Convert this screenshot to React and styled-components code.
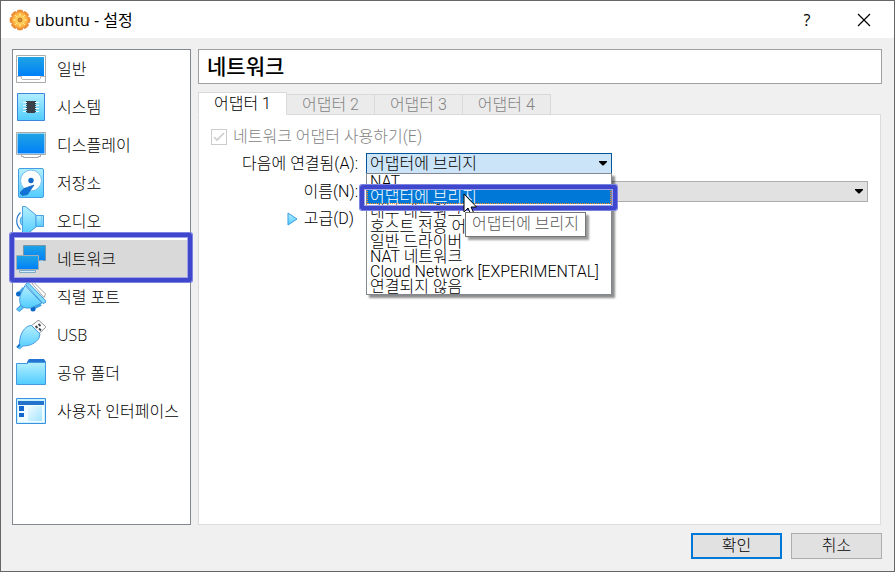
import React, { useState } from 'react';
import styled, { createGlobalStyle } from 'styled-components';

const GlobalStyle = createGlobalStyle`
  * {
    box-sizing: border-box;
  }
  body {
    margin: 0;
    color: #000;
    font-family: Roboto, "Noto Sans CJK KR", sans-serif;
    font-size: 16px;
    font-weight: 300;
    line-height: 20px;
  }
  button, select, input {
    font: inherit;
    color: inherit;
  }
`;

const Window = styled.div`
  display: flex;
  flex-direction: column;
  min-height: 100vh;
  border: 1px solid #666;
  background: #f0f0f0;
`;

const TitleBar = styled.header`
  display: flex;
  align-items: center;
  height: 37px;
  padding-left: 8px;
  background: #fff;
  font-family: "Open Sans", "Noto Sans CJK KR", sans-serif;
  font-weight: 400;
`;

const Title = styled.h1`
  flex: 1;
  margin: 0 0 0 4px;
  font-size: 16px;
  font-weight: 400;
`;

const TitleButton = styled.button`
  display: flex;
  align-items: center;
  justify-content: center;
  width: 57px;
  height: 36px;
  padding: 0 3px 0 0;
  border: 0;
  background: none;
`;

const Body = styled.div`
  display: flex;
  flex: 1;
  gap: 7px;
  padding: 11px 12px 8px 11px;
`;

const Sidebar = styled.nav`
  flex: 0 0 179px;
  border: 1px solid #828790;
  background: #fff;
  font-family: "Open Sans", "Noto Sans CJK KR", sans-serif;
`;

const SideItem = styled.button`
  position: relative;
  display: flex;
  align-items: center;
  gap: 10px;
  width: 100%;
  height: 38px;
  padding: 0 2px;
  border: 0;
  background: ${(p) => (p.$active ? '#d9d9d9' : 'none')};
  white-space: nowrap;
  z-index: ${(p) => (p.$active ? 1 : 0)};
`;

const Marker = styled.span`
  position: absolute;
  inset: ${(p) => p.$inset};
  border: 4px solid #3f48cc;
  border-radius: 2px;
  box-shadow: 0 0 0 1px #7b82e2, inset 0 0 0 1px #9fa4ea;
  pointer-events: none;
`;

const Content = styled.main`
  display: flex;
  flex: 1;
  flex-direction: column;
  min-width: 0;
`;

const Heading = styled.h2`
  display: flex;
  align-items: center;
  height: 35px;
  margin: 0 0 8px;
  padding: 0 8px;
  border: 1px solid #a0a0a0;
  background: #fff;
  font-size: 21px;
  font-weight: 500;
`;

const Tabs = styled.div`
  display: flex;
  align-items: flex-end;
  height: 23px;
  margin-bottom: -1px;
`;

const Tab = styled.button`
  position: relative;
  height: ${(p) => (p.$active ? 23 : 21)}px;
  padding: 0 15px;
  border: 1px solid #d9d9d9;
  border-left-width: ${(p) => (p.$first ? 1 : 0)}px;
  border-bottom-color: ${(p) => (p.$active ? '#fff' : '#d9d9d9')};
  background: ${(p) => (p.$active ? '#fff' : '#ebebeb')};
  color: ${(p) => (p.$active ? '#000' : '#838383')};
  line-height: 18px;
`;

const Panel = styled.section`
  flex: 1;
  margin-right: 1px;
  padding: 11px 12px;
  border: 1px solid #dcdcdc;
  background: #fff;
`;

const CheckRow = styled.label`
  display: flex;
  align-items: center;
  gap: 6px;
  height: 22px;
  color: #838383;
`;

const Checkbox = styled.input`
  appearance: none;
  width: 16px;
  height: 16px;
  margin: 0;
  border: 1px solid #ccc;
  background: #fff;
`;

const CheckWrap = styled.span`
  position: relative;
  display: flex;

  svg {
    position: absolute;
    inset: 0;
  }
`;

const Form = styled.div`
  display: grid;
  grid-template-columns: 147px 1fr;
  gap: 7px 8px;
  align-items: center;
  margin-top: 5px;
`;

const Label = styled.label`
  text-align: right;
  white-space: nowrap;
`;

const SelectWrap = styled.div`
  position: relative;
  width: ${(p) => p.$width};

  > svg {
    position: absolute;
    top: 8px;
    right: 5px;
    pointer-events: none;
  }
`;

const Select = styled.select`
  appearance: none;
  display: block;
  width: 100%;
  height: 21px;
  padding: 0 20px 0 3px;
  border: 1px solid ${(p) => (p.$open ? '#00559b' : '#adadad')};
  border-radius: 0;
  outline: 0;
  background: ${(p) => (p.$open ? '#cce4f7' : '#e1e1e1')};
  line-height: 18px;
`;

const Popup = styled.ul`
  position: absolute;
  top: 100%;
  left: 0;
  z-index: 2;
  width: 100%;
  margin: -1px 0 0;
  padding: 0;
  border: 1px solid #828790;
  background: #fff;
  box-shadow: 3px 3px 2px rgba(0, 0, 0, 0.45);
  list-style: none;
`;

const Option = styled.li`
  position: relative;
  z-index: ${(p) => (p.$active ? 1 : 0)};
  height: 15px;
  padding-left: 3px;
  background: ${(p) => (p.$active ? '#0078d7' : 'none')};
  outline: ${(p) => (p.$active ? '1px dotted #ff8728' : 'none')};
  outline-offset: -1px;
  color: ${(p) => (p.$active ? '#fff' : '#000')};
  line-height: 15px;
  white-space: nowrap;
`;

const Pointer = styled.svg`
  position: absolute;
  top: 4px;
  left: 96px;
`;

const Tooltip = styled.span`
  position: absolute;
  top: 23px;
  left: 98px;
  height: 25px;
  padding: 0 6px;
  border: 1px solid #767676;
  background: #fff;
  box-shadow: 3px 3px 2px rgba(0, 0, 0, 0.4);
  color: #575757;
  line-height: 22px;
`;

const Advanced = styled.button`
  display: flex;
  grid-column: 1;
  align-items: center;
  justify-self: end;
  gap: 6px;
  padding: 0 4px 0 0;
  border: 0;
  background: none;
`;

const Footer = styled.footer`
  display: flex;
  justify-content: flex-end;
  gap: 9px;
  padding: 0 12px 12px;
`;

const Button = styled.button`
  width: 91px;
  height: 26px;
  padding: 0;
  border: ${(p) => (p.$primary ? '2px solid #0078d7' : '1px solid #adadad')};
  background: #e1e1e1;
`;

const Gradients = () => (
  <svg width="0" height="0" style={{ position: 'absolute' }} aria-hidden="true">
    <defs>
      <linearGradient id="screen" x1="0" y1="0" x2="0" y2="1">
        <stop offset="0" stopColor="#20a4e4" />
        <stop offset="1" stopColor="#0080f8" />
      </linearGradient>
      <linearGradient id="sky" x1="0" y1="0" x2="0" y2="1">
        <stop offset="0" stopColor="#b4efff" />
        <stop offset="1" stopColor="#50ccff" />
      </linearGradient>
      <linearGradient id="pane" x1="0" y1="0" x2="1" y2="1">
        <stop offset="0" stopColor="#effbff" />
        <stop offset="1" stopColor="#a5e5ff" />
      </linearGradient>
      <radialGradient id="gear">
        <stop offset="0" stopColor="#ffe06a" />
        <stop offset="0.6" stopColor="#ffc552" />
        <stop offset="1" stopColor="#f7983a" />
      </radialGradient>
    </defs>
  </svg>
);

const icons = {
  general: (
    <>
      <path d="M1.5 2.5h29v27h-29z" fill="#fff" stroke="#a9abad" />
      <path d="M3 4h26v19H3z" fill="url(#screen)" />
      <path d="M2 23.500h4.500v2l1 1h17l1-1v-2H30" fill="none" stroke="#b5b7b9" />
    </>
  ),
  system: (
    <>
      <path d="M2.5 2.5h27v27h-27z" fill="url(#sky)" stroke="#3c87dc" />
      <path d="M8 11.500h16M8 14.500h16M8 17.500h16M8 20.500h16" stroke="#e6fbff" />
      <path d="M12 10h8v12h-8z" fill="#3b414b" />
      <path d="M11.500 10v12M20.500 10v12" stroke="#3b414b" strokeDasharray="1 1" />
    </>
  ),
  display: (
    <>
      <path d="M6.500 25.500h19v2h-2v1h-15v-1h-2z" fill="#fff" stroke="#a2a4a6" />
      <path d="M1.500 3.500h29v22h-29z" fill="#fff" stroke="#a9abad" />
      <path d="M2.500 4.500h27v20h-27z" fill="url(#screen)" />
    </>
  ),
  storage: (
    <>
      <rect x="3.500" y="1.500" width="25" height="29" rx="1.500" fill="url(#sky)" stroke="#429ce4" />
      <circle cx="16" cy="13.500" r="10.500" fill="#fff" stroke="#76bfec" />
      <circle cx="16" cy="13.500" r="2.700" fill="#1269c8" />
      <path d="M19 18 9 21.500 5.500 25v2l2 1.500 5-1z" fill="#1173d7" stroke="#1262bc" strokeWidth="0.700" />
    </>
  ),
  audio: (
    <>
      <path d="M5.500 7.500C.500 12 .500 20 5.500 24.500" fill="none" stroke="#2c7bcc" strokeWidth="1.200" />
      <path d="M7.500 11.500c-3 1-3 8 0 9z" fill="#6dd5fa" stroke="#4a9fe0" />
      <path d="M7.500 1.500h3L21 10v12l-10.500 8.500h-3z" fill="url(#sky)" stroke="#4aa0e2" />
      <path d="M21 10.500h7.500v11H21z" fill="url(#sky)" stroke="#4aa0e2" />
      <path d="M26.500 11v10" stroke="#7bc6f0" />
    </>
  ),
  network: (
    <>
      <path d="M8.500 2.500h22v15h-22z" fill="url(#screen)" stroke="#7896aa" />
      <path d="M25 18.500h3" stroke="#b8dff5" strokeWidth="2" />
      <path d="M4.500 27.500h16v2h-16z" fill="#d2edfd" stroke="#7daac8" />
      <path d="M1.500 12.500h22v14h-22z" fill="url(#screen)" stroke="#a1adb7" />
    </>
  ),
  serial: (
    <>
      <path d="m17 2.500 2-1 11.500 11.500-1.500 3.500z" fill="#fff" stroke="#a4a4a4" />
      <path d="M3.500 13 9 7M18 27.500l8-4" stroke="#3fa4e8" strokeWidth="3" />
      <circle cx="3.500" cy="13" r="2.500" fill="#0869ca" />
      <circle cx="18" cy="28" r="2.500" fill="#0869ca" />
      <path d="m6 24-4.500 4 2.500 2.500L8.500 27z" fill="#5bc9f8" stroke="#3a93dc" />
      <path d="M10 4.500 27 22l-8 3.500c-5 2.500-10 2-13-1-2-4-1.500-9 .5-13z" fill="url(#sky)" stroke="#4299df" />
      <path d="M10.500 3.500 13 1.500l17.500 18v2l-2.500 1z" fill="#80dcfb" stroke="#4299df" />
    </>
  ),
  usb: (
    <>
      <path d="m16 7 7-5.500h1l6.500 6v1L23.500 15z" fill="#fff" stroke="#8f9194" />
      <path d="m20.500 7 2 2M24 9.500l2 2M23.500 5l2 2" stroke="#44474b" strokeWidth="1.800" />
      <path d="m13.500 7 3-.500 8.500 8.500-1 4c-3 5-9 8-16 8l-3.500 3-2-2 2-3c0-8 3-15 9-18z" fill="url(#sky)" stroke="#4699df" />
      <path d="m2 28.500 3-3" stroke="#1977ca" strokeWidth="2" />
    </>
  ),
  folder: (
    <>
      <path d="m12 5 2-3h15l2 3v3H12z" fill="#2474d2" />
      <path d="M1.500 6.500h11l1-1h17v22h-29z" fill="url(#sky)" stroke="#419ae1" />
    </>
  ),
  ui: (
    <>
      <path d="M1.500 3.500h29v25h-29z" fill="#c9f2ff" stroke="#3a91df" />
      <path d="M3 6h26v4H3z" fill="#2373cd" />
      <path d="M3 10h26v17H3z" fill="#f0fcff" />
      <path d="M4 11h5v5H4zM4 18h5v4H4z" fill="#1268ce" />
      <path d="M13 11h14v15H13z" fill="url(#pane)" />
    </>
  ),
};

const menu = [
  { id: 'general', name: '일반' },
  { id: 'system', name: '시스템' },
  { id: 'display', name: '디스플레이' },
  { id: 'storage', name: '저장소' },
  { id: 'audio', name: '오디오' },
  { id: 'network', name: '네트워크' },
  { id: 'serial', name: '직렬 포트' },
  { id: 'usb', name: 'USB' },
  { id: 'folder', name: '공유 폴더' },
  { id: 'ui', name: '사용자 인터페이스' },
];

const attachments = [
  'NAT',
  '어댑터에 브리지',
  '내부 네트워크',
  '호스트 전용 어댑터',
  '일반 드라이버',
  'NAT 네트워크',
  'Cloud Network [EXPERIMENTAL]',
  '연결되지 않음',
];

const teeth = [0, 45, 90, 135, 180, 225, 270, 315];

const GearIcon = () => (
  <svg width="22" height="22" viewBox="0 0 22 22" aria-hidden="true">
    <g fill="#f0912f" stroke="#d9731c" strokeWidth="0.500">
      {teeth.map((deg) => (
        <rect key={deg} x="8" y="1" width="6" height="6" rx="2" transform={`rotate(${deg} 11 11)`} />
      ))}
    </g>
    <circle cx="11" cy="11" r="8.400" fill="url(#gear)" />
    <path d="M11 4v3M11 15v3M4 11h3M15 11h3M6 6l2 2M14 14l2 2M6 16l2-2M14 8l2-2" stroke="#ffe98e" />
    <circle cx="11" cy="11" r="2" fill="#d8913f" stroke="#c26f1d" />
  </svg>
);

const Arrow = () => (
  <svg width="8" height="5" viewBox="0 0 8 5" aria-hidden="true">
    <path d="M0 0h8v1L4.500 4.500h-1L0 1z" fill="#000" />
  </svg>
);

const App = () => {
  const [page, setPage] = useState('network');
  const [tab, setTab] = useState(1);
  const [attached, setAttached] = useState(attachments[1]);

  return (
    <Window>
      <GlobalStyle />
      <Gradients />
      <TitleBar>
        <GearIcon />
        <Title>ubuntu - 설정</Title>
        <TitleButton aria-label="도움말">?</TitleButton>
        <TitleButton aria-label="닫기">
          <svg width="14" height="14" viewBox="0 0 14 14">
            <path d="m1 1 12 12M13 1 1 13" stroke="#000" strokeWidth="1.200" />
          </svg>
        </TitleButton>
      </TitleBar>

      <Body>
        <Sidebar>
          {menu.map((item) => (
            <SideItem key={item.id} $active={item.id === page} onClick={() => setPage(item.id)}>
              <svg width="32" height="32" viewBox="0 0 32 32" aria-hidden="true">{icons[item.id]}</svg>
              <span>{item.name}</span>
              {item.id === page && <Marker $inset="-7px -2px -4px -3px" />}
            </SideItem>
          ))}
        </Sidebar>

        <Content>
          <Heading>네트워크</Heading>
          <Tabs role="tablist">
            {[1, 2, 3, 4].map((n) => (
              <Tab
                key={n}
                role="tab"
                aria-selected={n === tab}
                $active={n === tab}
                $first={n === 1}
                onClick={() => setTab(n)}
              >
                어댑터 {n}
              </Tab>
            ))}
          </Tabs>
          <Panel>
            <CheckRow>
              <CheckWrap>
                <Checkbox type="checkbox" defaultChecked disabled />
                <svg width="16" height="16" viewBox="0 0 16 16" aria-hidden="true">
                  <path d="m3 8 3 3 7-7" fill="none" stroke="#ccc" strokeWidth="1.600" />
                </svg>
              </CheckWrap>
              네트워크 어댑터 사용하기(E)
            </CheckRow>
            <Form>
              <Label htmlFor="attached">다음에 연결됨(A):</Label>
              <SelectWrap $width="246px">
                <Select id="attached" $open value={attached} onChange={(e) => setAttached(e.target.value)}>
                  {attachments.map((name) => <option key={name}>{name}</option>)}
                </Select>
                <Arrow />
                <Popup role="listbox" aria-label="다음에 연결됨">
                  {attachments.map((name) => (
                    <Option
                      key={name}
                      role="option"
                      aria-selected={name === attached}
                      $active={name === attached}
                      onClick={() => setAttached(name)}
                    >
                      {name}
                      {name === attached && (
                        <>
                          <Marker $inset="-4px -6px -6px -7px" />
                          <Pointer width="14" height="26" viewBox="0 0 14 26" aria-hidden="true">
                            <path d="M1 1v18l4-4 3.500 8 3-1.500L8 14h5.500z" fill="#fff" stroke="#000" />
                          </Pointer>
                          <Tooltip>{name}</Tooltip>
                        </>
                      )}
                    </Option>
                  ))}
                </Popup>
              </SelectWrap>

              <Label htmlFor="adapter">이름(N):</Label>
              <SelectWrap $width="100%">
                <Select id="adapter" defaultValue="">
                  <option value="" />
                </Select>
                <Arrow />
              </SelectWrap>

              <Advanced>
                <svg width="11" height="14" viewBox="0 0 11 14" aria-hidden="true">
                  <path d="m1 1 9 6-9 6z" fill="url(#sky)" stroke="#3c9be0" />
                </svg>
                고급(D)
              </Advanced>
            </Form>
          </Panel>
        </Content>
      </Body>

      <Footer>
        <Button $primary>확인</Button>
        <Button>취소</Button>
      </Footer>
    </Window>
  );
};

export default App;
